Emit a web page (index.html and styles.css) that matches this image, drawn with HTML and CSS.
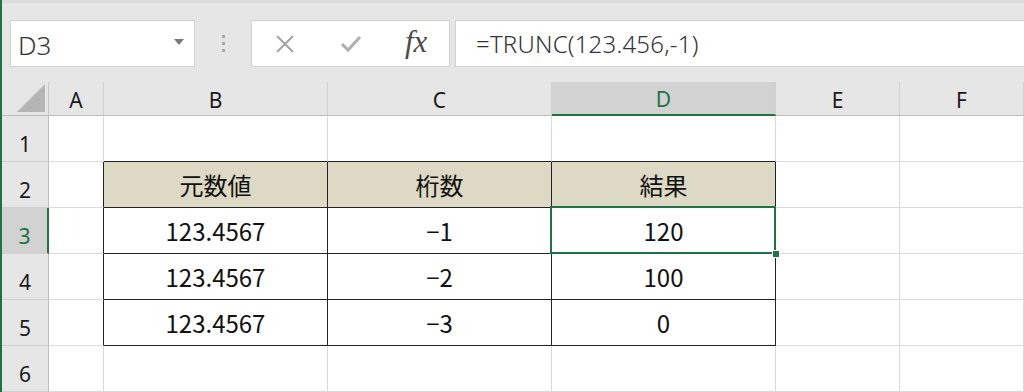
FILE: index.html
```html
<!DOCTYPE html>
<html lang="ja">

<head>
    <meta charset="UTF-8">
    <meta name="viewport" content="width=device-width, initial-scale=1.0">
    <title>TRUNC</title>
    <link rel="stylesheet" href="styles.css">
</head>

<body>

    <div class="formula-bar">
        <div class="name-box">
            <span>D3</span>
            <svg class="caret" width="10" height="6" viewBox="0 0 10 6"><polygon points="0,0 10,0 5,6" fill="#7a7a7a"/></svg>
        </div>
        <div class="grip"><i></i><i></i><i></i></div>
        <div class="fx-buttons">
            <span class="btn">
                <svg width="20" height="20" viewBox="0 0 20 20"><path d="M2 2 L18 18 M18 2 L2 18" stroke="#a3a3a3" stroke-width="2" fill="none"/></svg>
            </span>
            <span class="btn">
                <svg width="22" height="18" viewBox="0 0 22 18"><path d="M2 9 L8 15 L20 2" stroke="#b0b0b0" stroke-width="3" fill="none"/></svg>
            </span>
            <span class="btn fx">fx</span>
        </div>
        <div class="formula-input">=TRUNC(123.456,-1)</div>
    </div>

    <div class="sheet">
        <!-- column headers -->
        <div class="corner">
            <svg width="28" height="28" viewBox="0 0 28 28"><polygon points="28,0 28,28 0,28" fill="#b5b5b5"/></svg>
        </div>
        <div class="col-head">A</div>
        <div class="col-head">B</div>
        <div class="col-head">C</div>
        <div class="col-head active">D</div>
        <div class="col-head">E</div>
        <div class="col-head">F</div>

        <!-- row 1 -->
        <div class="row-head">1</div>
        <div class="cell"></div>
        <div class="cell top-edge"></div>
        <div class="cell top-edge"></div>
        <div class="cell top-edge"></div>
        <div class="cell"></div>
        <div class="cell"></div>

        <!-- row 2 -->
        <div class="row-head">2</div>
        <div class="cell left-edge"></div>
        <div class="cell tb title">元数値</div>
        <div class="cell tb title">桁数</div>
        <div class="cell tb title">結果</div>
        <div class="cell"></div>
        <div class="cell"></div>

        <!-- row 3 -->
        <div class="row-head active">3</div>
        <div class="cell left-edge"></div>
        <div class="cell tb">123.4567</div>
        <div class="cell tb">−1</div>
        <div class="cell tb selected">120</div>
        <div class="cell"></div>
        <div class="cell"></div>

        <!-- row 4 -->
        <div class="row-head">4</div>
        <div class="cell left-edge"></div>
        <div class="cell tb">123.4567</div>
        <div class="cell tb">−2</div>
        <div class="cell tb">100</div>
        <div class="cell"></div>
        <div class="cell"></div>

        <!-- row 5 -->
        <div class="row-head">5</div>
        <div class="cell left-edge"></div>
        <div class="cell tb">123.4567</div>
        <div class="cell tb">−3</div>
        <div class="cell tb">0</div>
        <div class="cell"></div>
        <div class="cell"></div>

        <!-- row 6 -->
        <div class="row-head">6</div>
        <div class="cell"></div>
        <div class="cell"></div>
        <div class="cell"></div>
        <div class="cell"></div>
        <div class="cell"></div>
        <div class="cell"></div>
    </div>

</body>

</html>
```

FILE: styles.css
```css
body {
    margin: 0;
    padding: 0;
    background-color: #e6e6e6;
    border-left: 2px solid #217346;
    font-family: "Noto Sans", "Noto Sans CJK JP", sans-serif;
    height: 392px;
    overflow: hidden;
}

/* formula bar */

.formula-bar {
    display: flex;
    align-items: center;
    height: 82px;
    padding-top: 2px;
    box-sizing: border-box;
    border-top: 3px solid #dcdcdc;
}

.name-box,
.fx-buttons,
.formula-input {
    height: 47px;
    box-sizing: border-box;
    background-color: #fff;
    border: 1px solid #d2d2d2;
}

.name-box {
    width: 185px;
    margin-left: 8px;
    display: flex;
    align-items: center;
    justify-content: space-between;
    padding: 2px 10px 0 7px;
    font-size: 26px;
    font-weight: 300;
    color: #333;
}

.name-box .caret {
    margin-bottom: 6px;
}

.grip {
    width: 56px;
    display: flex;
    flex-direction: column;
    align-items: center;
    gap: 4px;
}

.grip i {
    display: block;
    width: 3px;
    height: 3px;
    background-color: #a6a6a6;
}

.fx-buttons {
    width: 199px;
    display: flex;
    align-items: center;
}

.btn {
    width: 66px;
    display: flex;
    justify-content: center;
    align-items: center;
}

.btn.fx {
    font-family: "Liberation Serif", serif;
    font-style: italic;
    font-size: 31px;
    color: #4a4a4a;
    padding-bottom: 4px;
}

.formula-input {
    flex: 1;
    margin-left: 5px;
    border-right: none;
    display: flex;
    align-items: center;
    padding-left: 20px;
    font-size: 24px;
    font-weight: 300;
    letter-spacing: 0.2px;
    color: #333;
}

/* sheet */

.sheet {
    display: grid;
    grid-template-columns: 47px 55px 224px 224px 224px 124px 1fr;
    grid-template-rows: 34px repeat(6, 46px);
    background-color: #fff;
}

.sheet > div {
    box-sizing: border-box;
    display: flex;
    align-items: center;
    justify-content: center;
}

.corner {
    background-color: #e6e6e6;
    border-right: 1px solid #c8c8c8;
    border-bottom: 1px solid #bdbdbd;
    align-items: flex-end !important;
    justify-content: flex-end !important;
    padding: 0 3px 3px 0;
}

.col-head {
    background-color: #e6e6e6;
    border-right: 1px solid #d0d0d0;
    border-bottom: 1px solid #bdbdbd;
    font-size: 21px;
    color: #1a1a1a;
    padding-top: 2px;
}

.col-head.active {
    background-color: #d2d2d2;
    border-bottom: 2px solid #217346;
    color: #217346;
}

.row-head {
    background-color: #e6e6e6;
    border-right: 1px solid #bdbdbd;
    border-bottom: 1px solid #d0d0d0;
    font-size: 21px;
    color: #1a1a1a;
    padding-top: 10px;
}

.row-head.active {
    background-color: #d2d2d2;
    border-right: 2px solid #217346;
    color: #217346;
}

.cell {
    border-right: 1px solid #dadada;
    border-bottom: 1px solid #dadada;
    font-family: "Noto Sans CJK JP", sans-serif;
    font-size: 24px;
    color: #111;
}

.cell.top-edge {
    border-bottom-color: #222;
}

.cell.left-edge {
    border-right-color: #222;
}

.cell.tb {
    border-right-color: #222;
    border-bottom-color: #222;
}

.cell.title {
    background-color: #ddd9c4;
}

.cell.selected {
    position: relative;
}

.cell.selected::before {
    content: "";
    position: absolute;
    top: -2px;
    left: -2px;
    right: -1px;
    bottom: -1px;
    border: 2px solid #217346;
}

.cell.selected::after {
    content: "";
    position: absolute;
    right: -5px;
    bottom: -5px;
    width: 6px;
    height: 6px;
    background-color: #217346;
    border: 1px solid #fff;
}
```
